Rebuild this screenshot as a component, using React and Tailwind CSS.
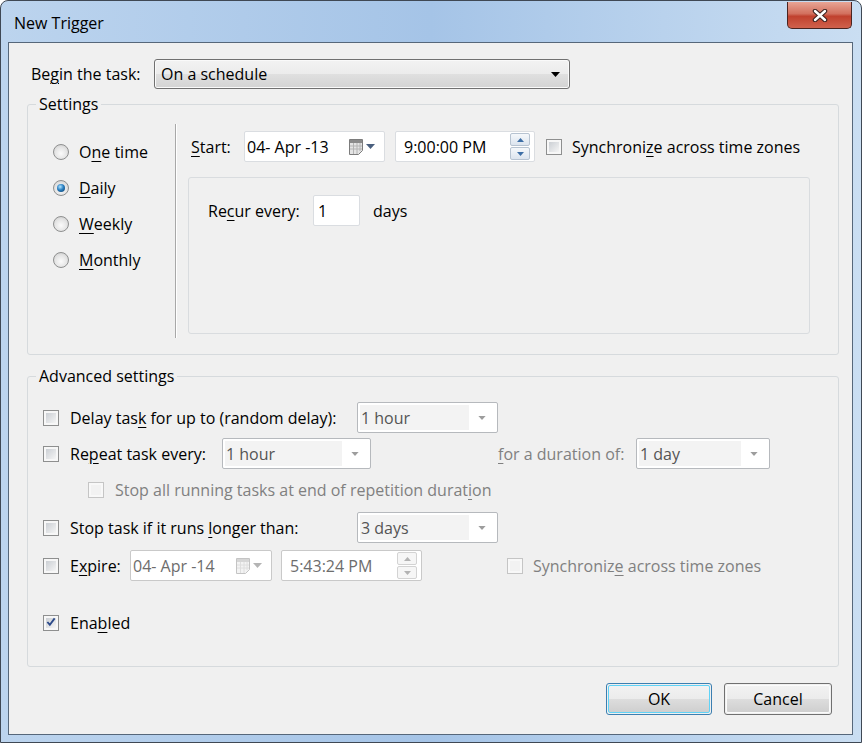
import React from 'react'

// access-key underline
const K = ({ children }) => (
  <span className="underline decoration-1 underline-offset-[3px]">{children}</span>
)

const Radio = ({ checked, children }) => (
  <div className="flex h-[24px] items-center gap-[10px]">
    <span className="flex h-[16px] w-[16px] items-center justify-center rounded-full border border-[#8e8f8f] bg-[radial-gradient(circle_at_50%_60%,#fbfbfb_0%,#e4e4e4_55%,#c6c6c6_100%)]">
      {checked && (
        <span className="h-[8px] w-[8px] rounded-full bg-[radial-gradient(circle_at_40%_35%,#b4e6ff_0%,#2b80c2_45%,#0b3860_100%)]" />
      )}
    </span>
    <span>{children}</span>
  </div>
)

const Check = ({ checked, disabled }) => (
  <span
    className={`flex h-[16px] w-[16px] shrink-0 border p-[2px] ${
      disabled ? 'border-[#c5c5c5] bg-[#f8f8f8]' : 'border-[#8e8f8f] bg-[#f7f7f7]'
    }`}
  >
    <span
      className={`flex h-full w-full items-center justify-center ${
        disabled ? 'bg-[#f2f2f2]' : 'bg-linear-to-br from-[#cbcfd4] to-[#f5f5f5]'
      }`}
    >
      {checked && (
        <svg width="11" height="10" viewBox="0 0 11 10" className="-mt-[1px]">
          <path d="M1.5 5 L4.2 8 L9.5 1" fill="none" stroke="#2c4a8a" strokeWidth="2" />
        </svg>
      )}
    </span>
  </span>
)

const Arrow = ({ color = '#000', w = 9, h = 5 }) => (
  <svg width={w} height={h} viewBox="0 0 9 5">
    <path d="M0 0 H9 L4.5 5 Z" fill={color} />
  </svg>
)

const Combo = ({ value, w }) => (
  <div
    className={`flex h-[31px] ${w} items-stretch rounded-[2px] border border-[#b6b9bd] bg-white p-[2px]`}
  >
    <div className="flex flex-1 items-center bg-[#f3f3f3] pl-[1px] text-[#555]">{value}</div>
    <div className="flex w-[26px] items-center justify-center">
      <Arrow color="#9d9d9d" w={8} h={4} />
    </div>
  </div>
)

const CalendarIcon = ({ disabled }) => (
  <div className="flex items-center gap-[3px]">
    <svg width="14" height="16" viewBox="0 0 14 16">
      <path
        d="M0.5 0.5 H13.5 V11.5 L9.5 15.5 H0.5 Z"
        fill={disabled ? '#f3f3f3' : '#e4e4e4'}
        stroke={disabled ? '#c4c4c4' : '#7c7c7c'}
      />
      <rect x="1" y="1" width="12" height="3" fill={disabled ? '#d6d6d6' : '#8a8a8a'} />
      <path
        d="M1 7 H13 M1 10 H13 M4.5 4 V15 M8 4 V15 M11 4 V12"
        stroke={disabled ? '#dedede' : '#b4b4b4'}
        strokeWidth="1"
      />
    </svg>
    <Arrow color={disabled ? '#b4b4b4' : '#4a5f7e'} w={9} h={5} />
  </div>
)

const DateBox = ({ value, disabled, w }) => (
  <div
    className={`flex h-[31px] ${w} items-center justify-between rounded-[2px] border bg-white pl-[2px] pr-[9px] ${
      disabled ? 'border-[#c9c9c9] text-[#6d6d6d]' : 'border-[#dadde1] text-black'
    }`}
  >
    <span>{value}</span>
    <CalendarIcon disabled={disabled} />
  </div>
)

const Spinner = ({ disabled }) => (
  <div className="flex flex-col gap-[1px]">
    {['M0 4 L3.5 0 L7 4 Z', 'M0 0 L3.5 4 L7 0 Z'].map((d) => (
      <div
        key={d}
        className={`flex h-[13px] w-[20px] items-center justify-center rounded-[2px] border ${
          disabled
            ? 'border-[#d3d3d3] bg-[#f6f6f6]'
            : 'border-[#b7c3d1] bg-linear-to-b from-[#f5f8fb] to-[#dce4ee]'
        }`}
      >
        <svg width="7" height="4" viewBox="0 0 7 4">
          <path d={d} fill={disabled ? '#b3b3b3' : '#3d6ea6'} />
        </svg>
      </div>
    ))}
  </div>
)

const TimeBox = ({ value, disabled, w }) => (
  <div
    className={`flex h-[31px] ${w} items-center justify-between rounded-[2px] border bg-white pl-[8px] pr-[4px] ${
      disabled ? 'border-[#c9c9c9] text-[#6d6d6d]' : 'border-[#dadde1] text-black'
    }`}
  >
    <span>{value}</span>
    <Spinner disabled={disabled} />
  </div>
)

const Button = ({ children, primary }) => (
  <button
    className={`h-[32px] rounded-[3px] border p-[1px] ${
      primary ? 'w-[106px] border-[#3c7fb1]' : 'w-[108px] border-[#707070]'
    }`}
  >
    <span
      className={`flex h-full w-full items-center justify-center rounded-[2px] border bg-[linear-gradient(to_bottom,#f2f2f2_0%,#ebebeb_50%,#dddddd_50%,#cfcfcf_100%)] ${
        primary ? 'border-[#5fd3f7]' : 'border-[#fbfbfb]'
      }`}
    >
      {children}
    </span>
  </button>
)

const App = () => {
  return (
    <div className="h-[747px] w-[865px] bg-white font-['Open_Sans','Noto_Sans',sans-serif] text-[16px] leading-[20px] text-black">
      <div className="h-[743px] w-[862px] rounded-t-[8px] border border-[#3f4854] bg-linear-to-r from-[#bcd4ee] via-[#a5c4e7] to-[#cadef2]">
        {/* title bar */}
        <div className="flex h-[41px] items-start justify-between">
          <div className="pl-[13px] pt-[12px] text-[16px] leading-[20px]">New Trigger</div>
          <div className="mr-[9px] mt-[1px] flex h-[27px] w-[65px] items-center justify-center rounded-b-[5px] border border-t-0 border-[#4a2420] bg-[linear-gradient(to_bottom,#e8a595_0%,#d2705e_45%,#c0412e_55%,#d0614c_100%)]">
            <svg width="16" height="13" viewBox="0 0 16 13">
              <path d="M3 2 L13 11 M13 2 L3 11" stroke="#3a2220" strokeWidth="4.5" strokeLinecap="round" />
              <path d="M3 2 L13 11 M13 2 L3 11" stroke="#fff" strokeWidth="2.4" strokeLinecap="round" />
            </svg>
          </div>
        </div>

        {/* client area */}
        <div className="ml-[7px] h-[693px] w-[845px] border border-[#56677a] bg-[#f0f0f0]">
          {/* begin the task */}
          <div className="flex items-center pl-[22px] pt-[16px]">
            <div className="w-[123px]">
              Be<K>g</K>in the task:
            </div>
            <div className="flex h-[30px] w-[416px] items-center justify-between rounded-[3px] border border-[#707070] bg-[linear-gradient(to_bottom,#f3f3f3_0%,#ececec_50%,#e0e0e0_50%,#d3d3d3_100%)] pl-[6px] pr-[9px] shadow-[inset_0_0_0_1px_#fafafa]">
              <span>On a schedule</span>
              <Arrow />
            </div>
          </div>

          {/* settings */}
          <fieldset className="ml-[18px] mt-[5px] w-[812px] rounded-[3px] border border-[#d6dadd]">
            <legend className="ml-[8px] px-[3px]">Settings</legend>
            <div className="flex h-[224px] pt-[10px]">
              <div className="flex w-[147px] flex-col gap-[12px] pl-[25px] pt-[16px]">
                <Radio>
                  O<K>n</K>e time
                </Radio>
                <Radio checked>
                  <K>D</K>aily
                </Radio>
                <Radio>
                  <K>W</K>eekly
                </Radio>
                <Radio>
                  <K>M</K>onthly
                </Radio>
              </div>
              <div className="w-[2px] border-l border-r border-l-[#a8a8a8] border-r-white" />
              <div className="pl-[11px] pt-[7px]">
                <div className="flex items-center pl-[3px]">
                  <div className="w-[53px]">
                    <K>S</K>tart:
                  </div>
                  <DateBox value="04- Apr -13" w="w-[141px]" />
                  <div className="ml-[10px]">
                    <TimeBox value="9:00:00 PM" w="w-[140px]" />
                  </div>
                  <div className="ml-[11px] flex items-center gap-[10px]">
                    <Check />
                    <span>
                      Synchroni<K>z</K>e across time zones
                    </span>
                  </div>
                </div>
                <div className="mt-[15px] h-[157px] w-[622px] rounded-[3px] border border-[#d9dcdf] pl-[19px] pt-[17px]">
                  <div className="flex items-center">
                    <div className="w-[105px]">
                      Re<K>c</K>ur every:
                    </div>
                    <div className="flex h-[31px] w-[47px] items-center rounded-[2px] border border-[#dadde1] bg-white pl-[4px]">
                      1
                    </div>
                    <span className="ml-[13px]">days</span>
                  </div>
                </div>
              </div>
            </div>
            <div className="h-[16px]" />
          </fieldset>

          {/* advanced settings */}
          <fieldset className="ml-[18px] mt-[11px] w-[812px] rounded-[3px] border border-[#d6dadd]">
            <legend className="ml-[8px] px-[3px]">Advanced settings</legend>
            <div className="flex flex-col pb-[28px] pl-[15px] pt-[16px]">
              <div className="flex h-[31px] items-center">
                <Check />
                <div className="ml-[11px] w-[287px]">
                  Delay tas<K>k</K> for up to (random delay):
                </div>
                <Combo value="1 hour" w="w-[141px]" />
              </div>

              <div className="mt-[5px] flex h-[31px] items-center">
                <Check />
                <div className="ml-[11px] w-[152px]">
                  Re<K>p</K>eat task every:
                </div>
                <Combo value="1 hour" w="w-[149px]" />
                <div className="ml-[127px] w-[138px] text-[#808080]">
                  <K>f</K>or a duration of:
                </div>
                <Combo value="1 day" w="w-[134px]" />
              </div>

              <div className="mt-[5px] flex h-[31px] items-center pl-[45px]">
                <Check disabled />
                <span className="ml-[11px] text-[#808080]">
                  Stop all running tasks at end of repetition durat<K>i</K>on
                </span>
              </div>

              <div className="mt-[7px] flex h-[31px] items-center">
                <Check />
                <div className="ml-[11px] w-[287px]">
                  Stop task if it runs <K>l</K>onger than:
                </div>
                <Combo value="3 days" w="w-[141px]" />
              </div>

              <div className="mt-[7px] flex h-[31px] items-center">
                <Check />
                <div className="ml-[11px] w-[60px]">
                  E<K>x</K>pire:
                </div>
                <DateBox value="04- Apr -14" disabled w="w-[142px]" />
                <div className="ml-[9px]">
                  <TimeBox value="5:43:24 PM" disabled w="w-[141px]" />
                </div>
                <div className="ml-[85px] flex items-center gap-[10px]">
                  <Check disabled />
                  <span className="text-[#808080]">
                    Synchroniz<K>e</K> across time zones
                  </span>
                </div>
              </div>

              <div className="mt-[26px] flex h-[31px] items-center">
                <Check checked />
                <span className="ml-[11px]">
                  Ena<K>b</K>led
                </span>
              </div>
            </div>
          </fieldset>

          {/* buttons */}
          <div className="mt-[16px] flex justify-end gap-[12px] pr-[20px]">
            <Button primary>OK</Button>
            <Button>Cancel</Button>
          </div>
        </div>
      </div>
    </div>
  )
}

export default App
